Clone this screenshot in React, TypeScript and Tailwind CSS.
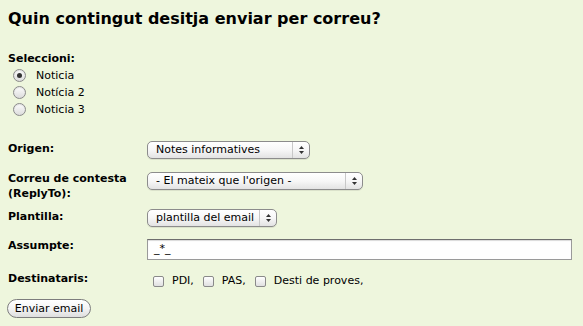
import * as React from "react";

function Select({ value, width }: { value: string; width: string }) {
  return (
    <div
      className={`flex h-[18px] items-stretch rounded-[5px] border border-[#8c8c8c] bg-gradient-to-b from-white via-[#f7f7f7] to-[#e3e3e3] shadow-[0_1px_0_rgba(0,0,0,0.08)] ${width}`}
    >
      <span className="flex-1 truncate pl-[8px] text-[11px] leading-[16px] text-black">{value}</span>
      <span className="flex w-[17px] flex-col items-center justify-center gap-[2px] border-l border-[#c8c8c8]">
        <svg width="5" height="3" viewBox="0 0 5 3">
          <path d="M2.5 0 L5 3 L0 3 Z" fill="#333" />
        </svg>
        <svg width="5" height="3" viewBox="0 0 5 3">
          <path d="M0 0 L5 0 L2.5 3 Z" fill="#333" />
        </svg>
      </span>
    </div>
  );
}

function Radio({ checked }: { checked?: boolean }) {
  return (
    <span className="flex h-[13px] w-[13px] items-center justify-center rounded-full border border-[#8a8a8a] bg-gradient-to-b from-[#fdfdfd] to-[#dcdcdc] shadow-[inset_0_1px_1px_rgba(0,0,0,0.1)]">
      {checked && <span className="h-[5px] w-[5px] rounded-full bg-[#333]" />}
    </span>
  );
}

function Checkbox() {
  return (
    <span className="h-[11px] w-[11px] rounded-[2px] border border-[#8a8a8a] bg-gradient-to-b from-white to-[#e0e0e0]" />
  );
}

function Row({
  label,
  children,
  className = "",
}: {
  label: React.ReactNode;
  children: React.ReactNode;
  className?: string;
}) {
  return (
    <div className={`flex items-start ${className}`}>
      <div className="w-[139px] shrink-0 font-bold">{label}</div>
      <div className="flex-1">{children}</div>
    </div>
  );
}

export default function App() {
  const noticies = ["Noticia", "Notícia 2", "Noticia 3"];
  return (
    <div className="h-[326px] w-[583px] overflow-hidden bg-[#eef6dd] pl-[8px] font-['DejaVu_Sans',Verdana,sans-serif] text-[11px] text-black">
      <h1 className="pt-[9px] text-[16px] font-bold leading-[20px]">
        Quin contingut desitja enviar per correu?
      </h1>

      {/* Seleccioni */}
      <div className="mt-[23px] font-bold leading-[14px]">Seleccioni:</div>
      <div className="mt-[1px] flex flex-col">
        {noticies.map((n, i) => (
          <label key={n} className="flex h-[17px] items-center pl-[5px]">
            <Radio checked={i === 0} />
            <span className="ml-[10px] leading-[14px]">{n}</span>
          </label>
        ))}
      </div>

      {/* Form */}
      <Row label={<span className="block pt-[1px] leading-[14px]">Origen:</span>} className="mt-[23px]">
        <Select value="Notes informatives" width="w-[163px]" />
      </Row>

      <Row
        label={
          <span className="block leading-[15px]">
            Correu de contesta
            <br />
            (ReplyTo):
          </span>
        }
        className="mt-[12px]"
      >
        <div className="pt-[1px]">
          <Select value="- El mateix que l'origen -" width="w-[216px]" />
        </div>
      </Row>

      <Row label={<span className="block pt-[1px] leading-[14px]">Plantilla:</span>} className="mt-[8px]">
        <Select value="plantilla del email" width="w-[130px]" />
      </Row>

      <Row label={<span className="block leading-[14px]">Assumpte:</span>} className="mt-[12px]">
        <div className="flex h-[21px] w-[425px] items-center border border-[#9a9a9a] border-t-[#6e6e6e] bg-white pl-[6px] text-[11px] shadow-[inset_0_1px_1px_rgba(0,0,0,0.15)]">
          _*_
        </div>
      </Row>

      <Row label={<span className="block leading-[14px]">Destinataris:</span>} className="mt-[12px]">
        <div className="flex h-[14px] items-center pl-[6px] pt-[4px]">
          {["PDI,", "PAS,", "Desti de proves,"].map((d) => (
            <label key={d} className="mr-[9px] flex items-center">
              <Checkbox />
              <span className="ml-[8px] leading-[14px]">{d}</span>
            </label>
          ))}
        </div>
      </Row>

      <button className="mt-[13px] -ml-[1px] flex h-[19px] w-[84px] items-center justify-center rounded-full border border-[#7d7d7d] bg-gradient-to-b from-white via-[#f4f4f4] to-[#dedede] text-[11px] leading-[14px] text-black">
        Enviar email
      </button>
    </div>
  );
}
